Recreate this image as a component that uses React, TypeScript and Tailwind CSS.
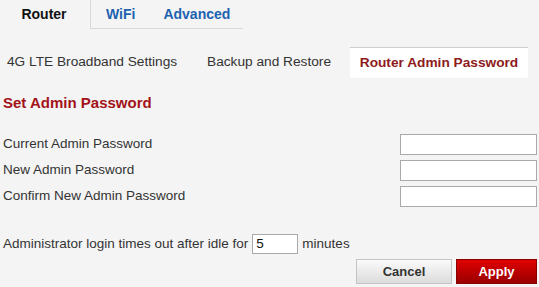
import React from "react";

export default function App() {
  return (
    <div className="w-[539px] h-[287px] bg-[#f4f4f4] overflow-hidden font-['Liberation_Sans',Arial,sans-serif] text-[#333]">
      {/* top tabs */}
      <div className="flex h-[29px]">
        <div className="w-[90px] h-[29px] flex items-center justify-center pr-[2px] text-[14px] font-bold text-[#111]">
          Router
        </div>
        <div className="w-[153px] h-[29px] border-l border-b border-[#d8d8d8] flex items-center pl-[15px] gap-[28px] text-[14px] font-bold text-[#1d62b0]">
          <span>WiFi</span>
          <span>Advanced</span>
        </div>
      </div>
      {/* sub tabs */}
      <div className="flex items-end mt-[18px] h-[31px] text-[13.7px]">
        <div className="pl-[7px] w-[207px] h-[31px] flex items-center">4G LTE Broadband Settings</div>
        <div className="w-[143px] h-[31px] flex items-center">Backup and Restore</div>
        <div className="w-[178px] h-[31px] bg-white border-t border-[#cfcfcf] flex items-center justify-center font-bold text-[#8e1a1c]">
          Router Admin Password
        </div>
      </div>
      {/* heading */}
      <div className="mt-[16px] pl-[3px] text-[15px] font-bold text-[#a3131a] leading-[18px]">Set Admin Password</div>
      {/* fields */}
      <div className="mt-[22px] flex flex-col gap-[5px] pl-[3px] pr-[2px] text-[13.5px]">
        {["Current Admin Password", "New Admin Password", "Confirm New Admin Password"].map((l) => (
          <div key={l} className="flex items-center justify-between h-[21px]">
            <span>{l}</span>
            <div className="w-[137px] h-[21px] bg-white border border-[#a9a9a9]" />
          </div>
        ))}
      </div>
      {/* timeout */}
      <div className="mt-[27px] pl-[3px] flex items-center h-[20px] text-[13.5px]">
        <span>Administrator login times out after idle for</span>
        <div className="ml-[4px] w-[46px] h-[20px] bg-white border border-[#a9a9a9] pl-[3px] text-[13.5px] leading-[18px] text-[#111]">5</div>
        <span className="ml-[4px]">minutes</span>
      </div>
      {/* buttons */}
      <div className="mt-[5px] flex justify-end gap-[4px] pr-[2px]">
        <button className="w-[96px] h-[25px] border border-[#c4c4c4] bg-gradient-to-b from-[#fafafa] to-[#dcdcdc] text-[13px] font-bold text-[#333]">
          Cancel
        </button>
        <button className="w-[81px] h-[25px] border border-[#8a0000] bg-gradient-to-b from-[#e00000] to-[#9a0000] text-[13px] font-bold text-white">
          Apply
        </button>
      </div>
    </div>
  );
}
